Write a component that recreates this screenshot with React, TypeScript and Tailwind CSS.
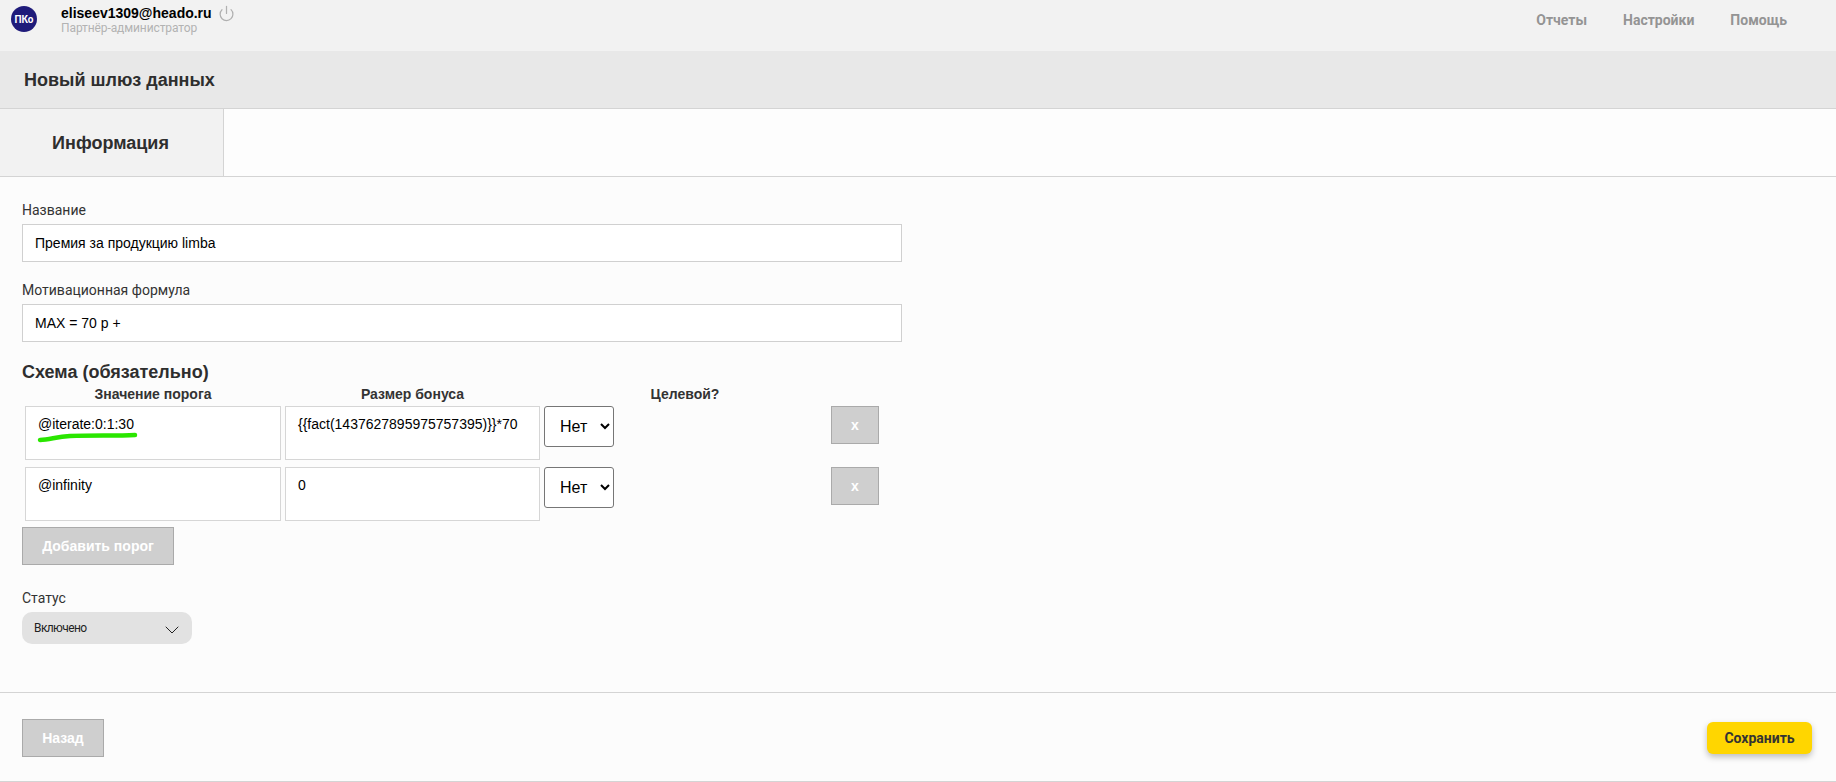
import { ChevronDown, Power } from "lucide-react"

const sans = "font-['Liberation_Sans',Arial,sans-serif]"
const roboto = "font-['Roboto',sans-serif]"

function GreyButton({ label, className }: { label: string; className: string }) {
  return (
    <button className={`flex items-center justify-center border border-[#aaaaaa] bg-[#cfcfcf] text-sm font-bold text-white ${className}`}>
      {label}
    </button>
  )
}

function TextField({ label, value, className }: { label: string; value: string; className: string }) {
  return (
    <div className={className}>
      <label className={`block h-[18px] text-sm leading-[18px] text-[#333] ${roboto}`}>{label}</label>
      <input
        readOnly
        value={value}
        className="mt-[5px] block h-[38px] w-[880px] border border-[#d0d0d0] bg-white px-[12px] text-sm text-black"
      />
    </div>
  )
}

function SchemeRow({ threshold, bonus, underline }: { threshold: string; bonus: string; underline?: boolean }) {
  return (
    <div className="relative flex h-[54px] items-start">
      <textarea
        readOnly
        value={threshold}
        className="ml-[3px] h-[54px] w-[256px] resize-none border border-[#d6d6d6] bg-white px-[12px] py-[8px] text-sm leading-[18px] text-black"
      />
      <textarea
        readOnly
        value={bonus}
        className="ml-[4px] h-[54px] w-[255px] resize-none border border-[#d6d6d6] bg-white px-[12px] py-[8px] text-sm leading-[18px] text-black"
      />
      <select className="ml-[4px] h-[41px] w-[70px] rounded-[3px] border border-[#767676] bg-white pl-[11px] text-base text-black">
        <option>Нет</option>
      </select>
      <GreyButton label="x" className="ml-[217px] h-[38px] w-[48px]" />
      {underline && (
        <svg className="absolute left-[14px] top-[24px]" width="106" height="14" viewBox="0 0 106 14" fill="none">
          <path d="M4 10 C14 9.5 20 7 34 6 C56 5 80 6 99 5" stroke="#2ae600" strokeWidth="4.5" strokeLinecap="round" />
        </svg>
      )}
    </div>
  )
}

export default function App() {
  return (
    <div className={`flex h-[782px] w-[1836px] flex-col overflow-hidden bg-[#fcfcfc] ${sans}`}>
      <header className="flex h-[51px] shrink-0 items-start justify-between bg-[#f2f2f2]">
        <div className="flex items-start">
          <div className={`ml-[11px] mt-[6px] flex h-[26px] w-[26px] items-center justify-center rounded-full bg-[#1f1b7a] text-[10px] font-bold text-white ${roboto}`}>
            ПКо
          </div>
          <div className="ml-[24px] mt-[4px]">
            <div className="flex items-center text-sm leading-[18px] font-bold text-black">
              eliseev1309@heado.ru
              <Power className="ml-[6px] text-[#b0b0b0]" size={17} strokeWidth={1.75} />
            </div>
            <div className={`text-xs leading-[13px] tracking-[-0.1px] text-[#b3b3b3] ${roboto}`}>Партнёр-администратор</div>
          </div>
        </div>
        <nav className={`mr-[49px] mt-[11px] flex gap-[36px] text-sm leading-[18px] font-bold text-[#949494] ${roboto}`}>
          <span>Отчеты</span>
          <span>Настройки</span>
          <span>Помощь</span>
        </nav>
      </header>

      <div className="flex h-[58px] shrink-0 items-center border-b border-[#d4d4d4] bg-[#e8e8e8] pl-[24px] text-lg font-bold text-[#2e2e2e]">
        Новый шлюз данных
      </div>

      <div className="flex h-[68px] shrink-0 border-b border-[#d4d4d4] bg-[#fdfdfd]">
        <div className="flex w-[224px] items-center justify-center border-r border-[#d4d4d4] bg-[#f2f2f2] pr-[2px] text-lg font-bold text-[#2e2e2e]">
          Информация
        </div>
      </div>

      <main className="h-[516px] shrink-0 border-b border-[#d4d4d4] pl-[22px]">
        <TextField label="Название" value="Премия за продукцию limba" className="pt-[24px]" />
        <TextField label="Мотивационная формула" value="MAX = 70 р +" className="pt-[19px]" />

        <h3 className="mt-[18px] text-lg leading-[24px] font-bold text-[#2e2e2e]">Схема (обязательно)</h3>
        <div className="mt-[1px] flex h-[18px] text-sm leading-[18px] font-bold text-[#333]">
          <span className="ml-[3px] w-[256px] text-center">Значение порога</span>
          <span className="ml-[4px] w-[255px] text-center">Размер бонуса</span>
          <span className="ml-[75px] w-[140px] text-center">Целевой?</span>
        </div>
        <div className="mt-[3px] flex flex-col gap-[7px]">
          <SchemeRow threshold="@iterate:0:1:30" bonus="{{fact(1437627895975757395)}}*70" underline />
          <SchemeRow threshold="@infinity" bonus="0" />
        </div>
        <GreyButton label="Добавить порог" className="mt-[6px] h-[38px] w-[152px]" />

        <label className={`mt-[24px] block h-[18px] text-sm leading-[18px] text-[#333] ${roboto}`}>Статус</label>
        <div className={`mt-[5px] flex h-[32px] w-[170px] items-center justify-between rounded-[10px] bg-[#e2e2e2] pl-[12px] pr-[8px] text-xs tracking-[-0.6px] text-[#222] ${roboto}`}>
          Включено
          <ChevronDown className="mt-[3px]" size={24} strokeWidth={1} />
        </div>
      </main>

      <footer className="flex h-[89px] shrink-0 items-start justify-between border-b border-[#d4d4d4] px-[22px]">
        <GreyButton label="Назад" className="mt-[26px] h-[38px] w-[82px]" />
        <button className={`mr-[2px] mt-[29px] h-[32px] w-[105px] rounded-[6px] bg-[#ffd600] text-sm font-bold text-[#333] shadow-[0_3px_6px_rgba(0,0,0,0.25)] ${roboto}`}>
          Сохранить
        </button>
      </footer>
    </div>
  )
}
